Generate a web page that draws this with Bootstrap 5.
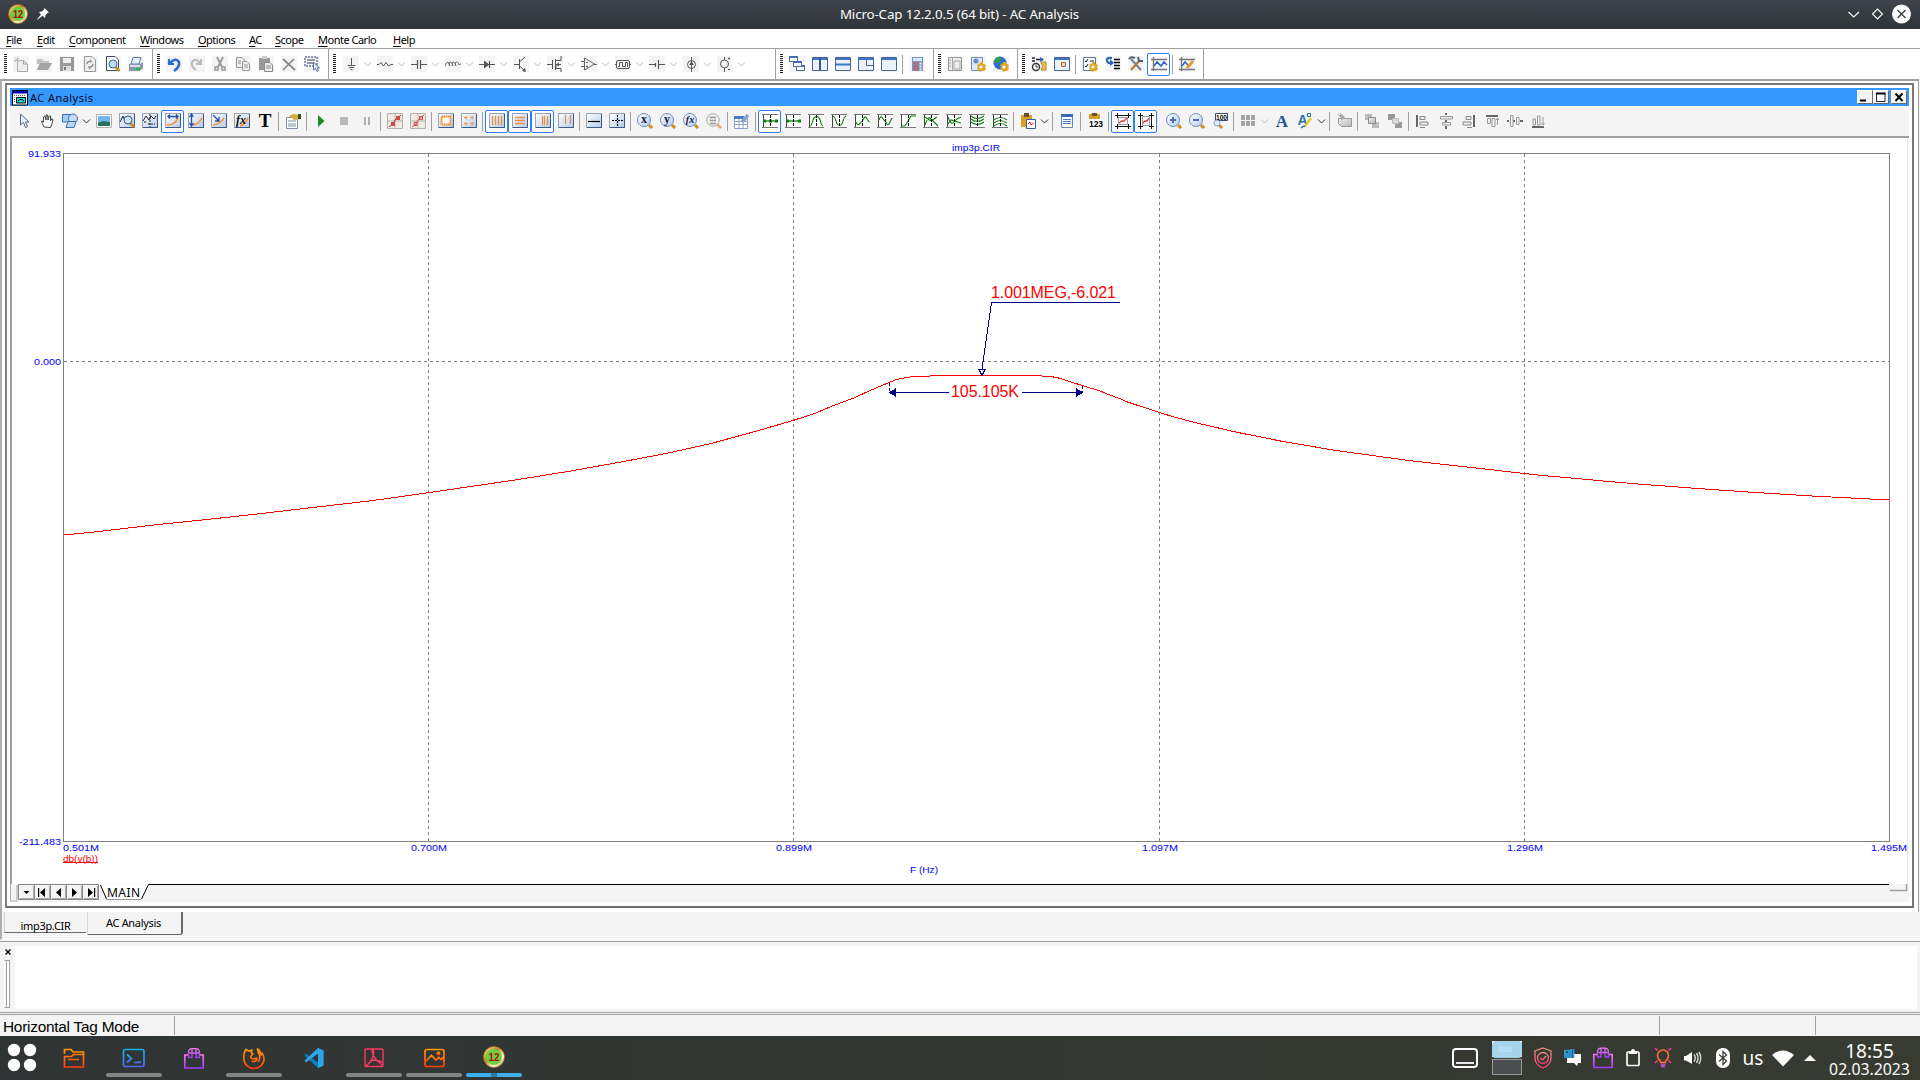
<!DOCTYPE html>
<html lang="en">
<head>
<meta charset="utf-8">
<title>Micro-Cap 12.2.0.5 (64 bit) - AC Analysis</title>
<link href="https://cdn.jsdelivr.net/npm/bootstrap@5.3.0/dist/css/bootstrap.min.css" rel="stylesheet">
<style>
body{width:1920px;height:1080px;overflow:hidden;background:#f4f4f4;color:#000;font:11px/14px "Noto Sans",sans-serif}
svg{display:block;flex:none}
.wm-title{height:29px;background:linear-gradient(#3e434c,#2f3437);color:#fcfcfc;font-size:13.33px;padding:0 9px 1px 8px}
.wm-title>span{letter-spacing:-.13px}
.wm-title>div{flex:1}
.menu-row{height:20px;display:grid;grid-template-columns:31px 32px 71px 58px 51px 26px 43px 75px 60px;padding:4px 0 0 6px;background:#fff;border-bottom:1px solid #a0a0a0;letter-spacing:-.5px}
.menu-row u{text-underline-offset:2px}
.bar-group{height:30px;border-right:1px solid #a0a0a0;padding-right:5px}
.grip-dots{width:9px;height:20px;flex:none;background:repeating-linear-gradient(#222 0 1px,transparent 1px 2px) 4px 0/3px 20px no-repeat}
.g-wide{width:447px}.g-wide .grip-dots{width:10px}
.tool{width:23px;height:23px;flex:none;display:flex;align-items:center;justify-content:center}
.tool svg{overflow:visible}
.bar-group .tool svg{background:#f4f4f4}
.tool-on{border:1px solid #2a7fff;border-radius:2px;background:#fff}
.drop{width:11px;flex:none}
.vsep{width:5px;flex:none;height:19px;border-left:1px solid #a0a0a0;margin-left:2px;margin-right:-2px}
.vgap{width:5px;flex:none}
.mdi{height:835px;width:1919px;background:#fff;border:1px solid #a0a0a0;border-top-width:2px;border-left:2px solid #b0b0b0;padding:2px 0 0 3px}
.child-win{width:1909px;height:825px;border:2px solid #808080;border-top-color:#777;border-bottom-color:#6c6c6c;border-right-color:#787878;padding:3px}
.child-head{height:18px;background:#3399ff;padding-right:2px}
.child-head span{letter-spacing:.45px;color:#0a0a20;padding-top:2px}
.wbtn{width:16px;height:14px;background:#f4f4f4;border:1px solid #fff;border-right:1px solid #696969;border-bottom:1px solid #696969}
.child-tools{height:30px;background:#f4f4f4;padding-left:2px}
.plot-pane{border-top:2px solid #a0a0a0;border-left:2px solid #a0a0a0}
.doc-tabs{height:28px;margin-top:-2px;background:#f4f4f4;border-left:2px solid #b0b0b0;border-bottom:1px solid #fff;padding-left:2px;letter-spacing:-.3px}
.dt{text-align:center;border-bottom:1px solid #696969;border-left:1px solid #d0d0d0}
.dt-a{width:82px;height:21px;padding:7px 0 0;margin-right:1px}
.dt-b{width:96px;height:23px;padding:4px 2px 0 0;border:solid #696969;border-width:0 2px 1px 1px;border-left-color:#d8d8d8;border-radius:0 0 3px 0}
.out-panel{height:72px;border-top:1px solid #a0a0a0;border-bottom:1px solid #a0a0a0;margin-top:1px;padding:4px 3px 3px 0}
.out-left{width:15px}
.out-grip{width:6px;height:48px;margin:2px 0 0 4px;border:1px solid #a0a0a0;border-left-color:#fff;background:linear-gradient(90deg,#f4f4f4 1px,#a0a0a0 1px 2px,#fff 2px)}
.state-row{height:22px;border-top:1px solid #a0a0a0;margin-top:1px;font:15.4px/22px "Liberation Sans",sans-serif;letter-spacing:-.25px;padding-top:1px}
.state-row div{border-right:1px solid #a0a0a0;height:19px}
.panel-bar{height:44px;background:linear-gradient(90deg,#303434,#343832 60%,#383b32);color:#fcfcfc;font-size:19px}
.task{width:60px;height:44px;padding-top:10px;display:flex;flex-direction:column;align-items:center;justify-content:space-between;border-bottom:3px solid transparent}
.task i{width:56px;height:4px;border-radius:2px;background:#858585}
.task i.live{background:linear-gradient(90deg,#3daee9 25px,#2e7ba5 25px 31px,#3daee9 31px)}
.tray{width:30px;height:44px;display:flex;align-items:center;justify-content:center}
.clock-box{width:98px;padding:5px 3px 0 0;text-align:center;line-height:20px}
.clock-box div+div{font-size:15.8px;line-height:16px}
</style>
<script src="https://cdn.jsdelivr.net/npm/bootstrap@5.3.0/dist/js/bootstrap.bundle.min.js"></script>
</head>
<body class="d-flex flex-column">

<svg width="0" height="0" class="position-absolute">
<defs>
<linearGradient id="gOr" x2="0" y2="1"><stop stop-color="#ff9a00"/><stop offset="1" stop-color="#ff3c10"/></linearGradient>
<linearGradient id="gBl" x2="0" y2="1"><stop stop-color="#12b5e8"/><stop offset="1" stop-color="#4d6bff"/></linearGradient>
<linearGradient id="gPu" x2="0" y2="1"><stop stop-color="#f07be8"/><stop offset="1" stop-color="#a03cff"/></linearGradient>
<linearGradient id="gRd" x2="0" y2="1"><stop stop-color="#f0937a"/><stop offset="1" stop-color="#ff3c78"/></linearGradient>
<linearGradient id="gGr" x2="1" y2="1"><stop stop-color="#f4f4f4"/><stop offset="1" stop-color="#b4b4b4"/></linearGradient>
<linearGradient id="gLb" x2="1" y2="1"><stop stop-color="#fff"/><stop offset="1" stop-color="#b4cbea"/></linearGradient>
<linearGradient id="gGold" x2="1" y2="1"><stop stop-color="#fff0a0"/><stop offset=".4" stop-color="#c08a20"/><stop offset=".7" stop-color="#fff6d0"/><stop offset="1" stop-color="#a06a18"/></linearGradient>
<symbol id="logo12" viewBox="0 0 20 20"><circle cx="10" cy="10" r="9.600" fill="url(#gGold)" stroke="#9a7428" stroke-width=".6"/><circle cx="10" cy="10" r="7.200" fill="#6ad040"/><text x="10" y="13.800" text-anchor="middle" font-family="Liberation Sans" font-weight="bold" font-size="10.500" textLength="10" lengthAdjust="spacingAndGlyphs" fill="#b00c0c">12</text></symbol>
<symbol id="bag" viewBox="0 0 22 22"><g fill="none" stroke="url(#gPu)" stroke-width="1.700"><path d="M5.500 7.500H1.800V20.500H20.200V7.500H16.500"/><path d="M5.500 10V4.500Q6 1.200 9 1.200H13Q16 1.200 16.500 4.500V10H13V5.500H9V10ZM9 1.500V5.500M13 1.500V5.500M5.500 5.500H16.500" stroke-width="1.300"/></g></symbol>
</defs></svg>

<header class="wm-title d-flex align-items-center">
 <div class="d-flex align-items-center"><svg width="20" height="20"><use href="#logo12"/></svg>
 <svg class="ms-2" width="14" height="14" viewBox="0 0 14 14"><path d="M8.500 1 13 5.500 11.500 6 9.500 8 9 11 6.500 8.800 1.500 12.800 1 12.500 5 7.500 3 5 6 4.500 8 2.500Z" fill="#fcfcfc"/></svg></div>
 <span>Micro-Cap 12.2.0.5 (64 bit) - AC Analysis</span>
 <div class="d-flex justify-content-end align-items-center"><svg width="64" height="20" viewBox="0 0 64 20" fill="none" stroke="#fcfcfc" stroke-width="1.100"><path d="M1.500 8 6.700 13 12 8M25.500 10 30.500 5 35.500 10 30.500 15Z"/><circle cx="54.500" cy="10" r="8.900" fill="#fcfcfc"/><path d="M50.500 6 58.500 14M58.500 6 50.500 14" stroke="#31363b" stroke-width="1.200"/></svg></div>
</header>

<nav class="menu-row"><span><u>F</u>ile</span><span><u>E</u>dit</span><span><u>C</u>omponent</span><span><u>W</u>indows</span><span><u>O</u>ptions</span><span><u>A</u>C</span><span><u>S</u>cope</span><span><u>M</u>onte Carlo</span><span><u>H</u>elp</span></nav>

<div class="d-flex bg-white">
 <div class="bar-group d-flex align-items-center" data-tools="new open save revert preview print"></div>
 <div class="bar-group d-flex align-items-center" data-tools="undo redo cut copy paste del selbox"></div>
 <div class="bar-group g-wide d-flex align-items-center" data-tools="gnd v res v cap v ind v diode v bjt v mos v opamp v pulse v bat v isrc v vsrc v"></div>
 <div class="bar-group d-flex align-items-center" data-tools="cascade tilev tileh overlap maxi | calc"></div>
 <div class="bar-group d-flex align-items-center" data-tools="panel usercfg globe"></div>
 <div class="bar-group d-flex align-items-center" data-tools="animate winopt | prefs golist tools +scope | scopeedit"></div>
</div>

<main class="mdi">
 <section class="child-win">
  <div class="child-head d-flex align-items-center">
   <svg width="20" height="17" viewBox="0 0 20 17"><path d="M2.500 1.500H17.500V16H2.500Z" fill="#fff" stroke="#000"/><path d="M3 2H17V4.500H3Z" fill="#0000b8"/><path d="M6.500 8.500H15.500V14H6.500Z" fill="#20e0e0" stroke="#000"/><path d="M8 12 10 10.500H12L14 12" stroke="#000" fill="none"/><path d="M4.500 8v6M4 6.500h11" stroke="#555" stroke-dasharray="1 1"/></svg>
   <span>AC Analysis</span>
   <svg class="wbtn ms-auto" viewBox="0 0 14 12"><path d="M2 9.500H8" stroke="#000" stroke-width="2"/></svg>
   <svg class="wbtn" viewBox="0 0 14 12"><path d="M2.500 2.500H11V10.500H2.500Z" fill="#fff" stroke="#223"/><path d="M2 2.500H11.500" stroke="#000" stroke-width="2"/></svg>
   <svg class="wbtn" style="margin-left:2px" viewBox="0 0 14 12"><path d="M3.500 2.500 10.500 10M10.500 2.500 3.500 10" stroke="#000" stroke-width="1.900"/></svg>
  </div>
  <div class="child-tools d-flex align-items-center" data-tools="arrow hand shapes V picture czoom cursor +hscale vscale tag fx bigT | props | play stop pause | redA redB | frame dots | +vlines +hlines +vl2 vl3 | hsplit cross | magX magY magF magE | table | +c0 c1 c2 c3 c4 c5 c6 c7 c8 c9 c10 | clip V | list | num | +boxh +boxv _ zin zout z100 | grid9 v bigA fontAB V | group | front back | al ac ar at am ab"></div>
  <div class="plot-pane">
   <svg width="1897" height="746" viewBox="12 138 1897 746" font-family="Liberation Sans, sans-serif" font-size="9.400" fill="none">
    <rect x="12" y="138" width="1897" height="746" fill="#fff"/>
    <path d="M1907.500 138V884" stroke="#e8e8e8"/>
    <g shape-rendering="crispEdges" stroke="#808080">
     <path d="M63.500 153.500H1889.500V841.500H63.500Z"/>
     <path d="M428.500 154V841M793.500 154V841M1159.500 154V841M1524.500 154V841M64 361.500H1889" stroke-dasharray="3 3"/>
    </g>
    <path shape-rendering="crispEdges" stroke="#f00" d="M64 535 97 531.700 151 525.300 205 519.700 260 513.700 297 509.300 317 507 369 501 389 498.300 428 492.700 464 487.500 515 480 569 471.300 622 461.800 665 453.700 711 443.500 754 431.800 793 420.500 816 413 831 406.500 853 398.300 869 391 889 382.500 897 379.300 907 377.500 913 376.500 930 376 931 375.500 1033 375.500 1051 376.500 1060 378.300 1068 381 1083 385.700 1100 391 1108 394.300 1122 399.500 1128 402.200 1160 412.700 1174 417 1194 422.300 1237 432.300 1250 434.900 1282 441.300 1336 450.500 1403 459.700 1408 460.500 1472 467.500 1524 473.500 1547 475.900 1566 477.500 1601 480.800 1638 484 1695 488.300 1748 492 1812 496 1889 500"/>
    <g shape-rendering="crispEdges" stroke="#000080">
     <path d="M1120 302.500H991.500L982 369M979 369.500H985L982 375.500Z"/><path d="M896 392.500H949M1022 392.500H1076"/>
     <path d="M889.500 383V392M1082.500 386V392" stroke-dasharray="3 2"/>
     <path d="M889.500 392.500 895.500 389V396ZM1082.500 392.500 1076.500 389V396Z" fill="#000080"/>
    </g>
    <g fill="#f00" font-size="16"><text x="991" y="298" textLength="125">1.001MEG,-6.021</text><text x="951" y="397" textLength="68">105.105K</text></g>
    <g fill="#00f" id="axis-labels">
     <text x="28" y="157" textLength="33" lengthAdjust="spacingAndGlyphs">91.933</text><text x="34" y="365" textLength="27" lengthAdjust="spacingAndGlyphs">0.000</text><text x="19" y="845" textLength="42" lengthAdjust="spacingAndGlyphs">-211.483</text>
     <text x="63" y="851" textLength="36" lengthAdjust="spacingAndGlyphs">0.501M</text><text x="411" y="851" textLength="36" lengthAdjust="spacingAndGlyphs">0.700M</text><text x="776" y="851" textLength="36" lengthAdjust="spacingAndGlyphs">0.899M</text><text x="1142" y="851" textLength="36" lengthAdjust="spacingAndGlyphs">1.097M</text><text x="1507" y="851" textLength="36" lengthAdjust="spacingAndGlyphs">1.296M</text><text x="1871" y="851" textLength="36" lengthAdjust="spacingAndGlyphs">1.495M</text>
     <text x="952" y="151" textLength="48" lengthAdjust="spacingAndGlyphs">imp3p.CIR</text><text x="910" y="873" textLength="28" lengthAdjust="spacingAndGlyphs">F (Hz)</text>
    </g>
    <text x="63" y="862" fill="#f00" textLength="35" lengthAdjust="spacingAndGlyphs">db(v(b))</text><path d="M63 862.500H98" stroke="#f00" shape-rendering="crispEdges"/>
   </svg>
  </div>
  <svg width="1899" height="19" viewBox="10 884 1899 19" font-family="Noto Sans, sans-serif">
   <rect x="10" y="884" width="1899" height="19" fill="#f4f4f4"/>
   <path d="M10.500 884V901H18" stroke="#b0b0b0" fill="none"/><path d="M10 902.500H1909" stroke="#fff"/>
   <path d="M17 885V900" stroke="#a0a0a0"/>
   <g fill="#f4f4f4" stroke="#888"><path d="M18.500 884.500h16v15h-16zM34.500 884.500h16v15h-16zM50.500 884.500h16v15h-16zM66.500 884.500h16v15h-16zM82.500 884.500h16v15h-16z"/><path d="M33.500 886v12.500H20M49.500 886v12.500H36M65.500 886v12.500H52M81.500 886v12.500H68M97.500 886v12.500H84" fill="none" stroke="#a8a8a8"/></g>
   <path d="M23.500 891h6l-3 3zM45 888v9l-5-4.500zM61 888v9l-5-4.500zM72 888v9l5-4.500zM88 888v9l5-4.500zM38 888h1.200v9H38zM94 888h1.200v9H94z"/>
   <path d="M100.500 884.500 106.500 899H141.500L148.500 884.500Z" fill="#fff"/>
   <path d="M100.500 885 106.500 899M141.500 899 148.500 884.500H1889" stroke="#000" fill="none"/><path d="M106.500 899.500H141" stroke="#999"/>
   <text x="107" y="897" font-size="12" textLength="33">MAIN</text>
   <path d="M1890 884H1907V891H1890Z" fill="#f4f4f4"/><path d="M1890 890.500H1906.500V884" stroke="#a0a0a0" stroke-width="1.500" fill="none"/>
  </svg>
 </section>
</main>

<div class="doc-tabs d-flex align-items-start"><div class="dt dt-a">imp3p.CIR</div><div class="dt dt-b">AC Analysis</div></div>

<div class="out-panel d-flex"><div class="out-left"><svg width="15" height="12" viewBox="0 0 15 12"><path d="M5.500 3.500 10.500 8.500M10.500 3.500 5.500 8.500" stroke="#111" stroke-width="1.500"/></svg><div class="out-grip"></div></div><div class="flex-fill bg-white"></div></div>

<footer class="state-row d-flex"><div style="width:175px;padding-left:3px">Horizontal Tag Mode</div><div style="width:1485px"></div><div style="width:156px"></div></footer>

<div class="panel-bar d-flex">
 <svg width="44" height="44" viewBox="0 0 44 44" fill="#fff"><circle cx="14" cy="14" r="6.200"/><circle cx="30" cy="14" r="6.200"/><circle cx="14" cy="29" r="6.200"/><circle cx="30" cy="29" r="6.200"/></svg>
 <div class="task"><svg width="24" height="24" viewBox="0 0 24 24" fill="none" stroke="url(#gOr)" stroke-width="1.700"><path d="M2.500 8V3.500H9L11 6H21.500V21H2.500V10.500H9.500L11.500 8.500H21M6 13.500H17"/></svg></div>
 <div class="task"><svg width="24" height="24" viewBox="0 0 24 24" fill="none" stroke="url(#gBl)" stroke-width="1.700"><rect x="1.500" y="3.500" width="20.500" height="17" rx="2"/><path d="M5 8.500 9.500 12.500 5 16.500"/><path d="M12 16.500 19 16.400"/></svg><i></i></div>
 <div class="task"><svg width="22" height="24" viewBox="0 0 22 24"><use href="#bag" y="1.500" width="22" height="22"/></svg></div>
 <div class="task"><svg width="24" height="24" viewBox="0 0 24 24" fill="none" stroke="url(#gOr)" stroke-width="1.700" stroke-linejoin="round"><path d="M4 3Q5 5 7 5L10 4Q8.500 7 11 8L9 10Q8 13 12 13Q15 11 15 13Q13 17 9.500 15M4 3Q1 8 2 13A10 9.500 0 0 0 22 13Q22 9 20 7L19 9Q18 4 15.500 3Q16 6 17.500 9Q18.500 13 16 16"/></svg><i></i></div>
 <div class="task"><svg width="22" height="24" viewBox="0 0 22 24"><path d="M15 2 20.500 4.500V19.500L15 22 1.500 9.500 3 7.500 15 16.500Z" fill="#0b7fc4"/><path d="M15 2 20.500 4.500V19.500L15 22V7.500L3 16.500 1.500 14.500Z" fill="#2da5ea"/></svg></div>
 <div class="task"><svg width="22" height="24" viewBox="0 0 22 24" fill="none" stroke="#ff3864" stroke-width="1.400"><rect x="2" y="3" width="18" height="17.500" rx="1"/><path d="M3 20Q12 13 10.500 4Q9.500 2 9 5Q10 13 20 19.500M7 15Q13 13 19 16"/></svg><i></i></div>
 <div class="task"><svg width="24" height="24" viewBox="0 0 24 24" fill="none" stroke="url(#gOr)" stroke-width="1.700"><rect x="3" y="3.500" width="19" height="17" rx="2"/><path d="M3 16 9.500 9.500 14 14 17 11.500 19 13.500 22 11"/><circle cx="16.500" cy="7.500" r="1.200"/></svg><i></i></div>
 <div class="task"><svg width="22" height="22"><use href="#logo12" width="22" height="22"/></svg><i class="live"></i></div>
 <div class="ms-auto tray" style="width:42px"><svg width="26" height="20" viewBox="0 0 26 20" fill="none" stroke="#fcfcfc"><rect x="1" y="1" width="24" height="18" rx="3" stroke-width="2"/><path d="M4 15H22" stroke-width="1.800"/></svg></div>
 <div class="tray" style="width:42px"><svg width="30" height="34" viewBox="0 0 30 34"><rect width="30" height="16" fill="#fff"/><rect width="30" height="17" rx="4" fill="#a5d3ec"/><rect x="6" y="5" width="14" height="6" fill="#b2ddf4"/><rect x=".5" y="18.500" width="29" height="15" fill="#4a4e50" stroke="#999"/></svg></div>
 <div class="tray"><svg width="20" height="22" viewBox="0 0 20 22" fill="none" stroke="url(#gRd)" stroke-width="1.300"><path d="M10 1 18 4V11Q18 18 10 21Q2 18 2 11V4Z"/><circle cx="10" cy="11" r="5.500"/><path d="M7.500 11 9.500 13 13 9"/></svg></div>
 <div class="tray"><svg width="18" height="18" viewBox="0 0 18 18"><path d="M3 5H17V14H14L13 17 10 14H3Z" fill="#fcfcfc"/><path d="M0 0H10V9H0Z" fill="#343832"/><path d="M1 9V1.500H5V9M7 0V9M3 4V9M9.500 0V9" stroke="#2ea0ea" stroke-width="1.700" fill="none"/></svg></div>
 <div class="tray"><svg width="22" height="22"><use href="#bag" width="22" height="22"/></svg></div>
 <div class="tray"><svg width="16" height="18" viewBox="0 0 16 18"><rect x="2" y="3" width="12" height="13.500" rx="1" fill="none" stroke="#fcfcfc" stroke-width="1.700"/><path d="M4 2H6A2 2 0 0 1 10 2H12V5H4Z" fill="#fcfcfc"/></svg></div>
 <div class="tray"><svg width="20" height="22" viewBox="0 0 20 22" fill="none" stroke="#ff7038" stroke-width="1.500"><path d="M7.500 14Q4.500 12 4.500 8.500A5.500 5.500 0 0 1 15.500 8.500Q15.500 12 12.500 14V15.500H7.500Z"/><path d="M2 1 4.500 3.500M18 1 15.500 3.500M2 16 4.500 13.500M18 16 15.500 13.500" stroke="#ff3c78"/><path d="M7.500 17.500h5M8 19.500h4" stroke="#a050c8" stroke-width="1.800"/></svg></div>
 <div class="tray"><svg width="18" height="16" viewBox="0 0 18 16"><path d="M0 6H2L8 2V14L2 10.500H0Z" fill="#fcfcfc"/><path d="M10 4.500Q12.500 8 10 11.500M12.500 3Q15.500 8 12.500 13M15 2Q18.500 8 15 14" stroke="#ccc" fill="none" stroke-width="1.500"/></svg></div>
 <div class="tray"><svg width="14" height="20" viewBox="0 0 14 20"><rect width="14" height="20" rx="6.500" fill="#fcfcfc"/><path d="M3 6.500 10.500 13 7 16.500V3.500L10.500 7 3 13.500" fill="none" stroke="#343832" stroke-width="1.200"/></svg></div>
 <div class="tray">us</div>
 <div class="tray"><svg width="22" height="17" viewBox="0 0 22 17"><path d="M0 5Q11-4 22 5L11 16.500Z" fill="#fcfcfc"/></svg></div>
 <div class="tray" style="width:24px"><svg width="12" height="6" viewBox="0 0 12 6"><path d="M0 6 6 0 12 6Z" fill="#fcfcfc"/></svg></div>
 <div class="clock-box"><div>18:55</div><div>02.03.2023</div></div>
</div>

<script>
// Shared pieces of the toolbar glyphs
const p=(d,c='#555',w=1,f='none')=>`<path d="${d}" stroke="${c}" stroke-width="${w}" fill="${f}"/>`;
const f=(d,c)=>`<path d="${d}" fill="${c}"/>`;
const sheet=(s='')=>`<rect x=".5" y=".5" width="15" height="14" fill="url(#gLb)" stroke="#9aa6b8"/>`+p('M15.500 1V14.500H1','#3c5a88')+`<g transform="translate(0 -1)">${s}</g>`;
const axes=s=>f('M0 1H16V15H0Z','#fff')+p('M1.500 1V15','#444')+p('M0 1.500H16M0 14.500H16','#777')+s+p('M8.500 2V14','#000').replace('/>',' stroke-dasharray="3 1"/>');
const green=d=>axes(p(d,'#0a800a',1.100));
const win=s=>f('M.5 1.500H15.500V14.500H.5Z','#eaf2fc')+p('M.5 1.500H15.500V14.500H.5Z','#4a6496')+f('M1 2H15V4H1Z','#3f74c8')+s;
const lens=(s,c='#6c8cc0')=>p('M12 12 15 15','#d08a20',3)+`<circle cx="7" cy="7" r="6.500" fill="url(#gLb)" stroke="${c}"/>`+s;
const letter=(t,x,y,z,c,k='')=>`<text x="${x}" y="${y}" font-size="${z}" fill="${c}" font-family="Liberation Serif" font-weight="bold" text-anchor="middle" ${k}>${t}</text>`;
const gear=f('M11 6h2v2l2 0 1 2-1 1 1 2-2 2h-2l-2 1-1-2-2-1 1-2-1-2 2-1z','#e0a820')+`<circle cx="11" cy="11" r="1.600" fill="#fff"/>`;
const G='#999',D='#555';
const icons={
new:p('M4.500 4.500H10.500L14.500 8V15.500H4.500Z','#aaa',1,'#eee')+p('M10.500 4.500V8H14','#999')+p('M1 4.500H7M4.500 1V7M2 2l4 4M6 2 2 6','#bbb'),
open:f('M1 3H6L8 5H13V8H1Z','#c4c4c4')+f('M4 7H16L12 14H1Z','#a4a4a4'),
save:f('M1 1H15V15H1Z',G)+f('M4 2H12V7H4Z','#eee')+f('M4 10H12V15H4Z','#ddd')+f('M5 11h2v3H5z','#777'),
revert:p('M2.500 .5H10L13.500 4V15.500H2.500Z',G,1,'#eee')+p('M5 8Q5 5 9 5.500L8 4M11 8Q11 11 7 11L8 13','#888',1.300),
preview:p('M1.500 .5H10L13.500 4V14.500H1.500Z','#3c4c70',1,'#fff')+p('M10.500 11 14.500 15','#d08a20',2.500)+`<circle cx="8" cy="8" r="4" fill="#b8dcf5" stroke="#49688c"/>`,
print:f('M5 1H13L11 8H3Z','#e8f2ff')+p('M5 1.500H13L11 8H3Z','#5577a8')+f('M1 8H12L15 6V12L12 15H1Z','#8897ac')+f('M2 9H12V11H2Z','#dde')+f('M8 12h4v2H8z','#20c030'),
undo:p('M3 3V8H8','#2c6cd8',2.200)+p('M4 7Q10 1 13 6Q14 11 8 15','#2c6cd8',2.600),
redo:p('M12 3V8H7','#bbb',2)+p('M11 7Q6 1 3 6Q2 11 7 14','#bbb',2.200),
cut:p('M5 1 10 11M11 1 6 11',G,1.800)+p('M3 11h3v3H3zM10 11h3v3h-3z',G,1.500),
copy:p('M1.500 1.500H7L9.500 4V11.500H1.500Z',G,1,'#eee')+p('M7.500 5.500H12L14.500 8V14.500H7.500ZM9 9h4M9 11h4M3 5h3M3 7h3',G,1,'#eee'),
paste:f('M1 2H12V14H1Z',G)+f('M4 0H9V3H4Z','#ccc')+p('M6.500 6.500H12L14.500 9V15.500H6.500ZM8 10h5M8 12h5','#888',1,'#eee'),
del:p('M2 3 14 14M13 3 2 14','#888',1.700),
selbox:`<rect x="1" y="1" width="12" height="9" fill="none" stroke="#223a70" stroke-dasharray="2 1"/>`+p('M3 4h8M3 7h6','#334')+p('M9.500 6V14L11.500 12.500 13 15.500 14.500 14.500 13 12H15.500Z','#3c5a88',.8,'#dbe8fa'),
gnd:p('M8.500 2V9M4.500 9.500H12.500M6 11.500H11M7.500 13.500H9.500',D,1),
res:p('M0 8.500H2L4 6.500 6.500 10 9 6.500 11.500 10 14 8.500H16',D,1),cap:p('M0 8.500H6M10 8.500H16M6.500 4V13M9.500 4V13',D,1.200),
ind:p('M0 10.500Q1 6 3 6L5 10 4 7Q6 4 8 10L7 7Q9 4 11 10L10 7Q13 4 14 9L16 8',D,.8),
diode:p('M0 8.500H16M10.500 5V12',D,1.200)+f('M5 4.500 10.500 8.500 5 12.500Z',D),bjt:p('M1 8.500H6M6.500 3V13M12 1 6.500 6M6.500 10 12 15',D,1)+f('M13 16 9 15 12 12Z',D),
mos:p('M0 8.500H5M5.500 4V13M8.500 3V14M8 4.500H14V0M8 12.500H14V16M14 8.500H9V12',D,1)+f('M9 8.500 12 6.500V10.500Z',D),
opamp:p('M3.500 2V14L13.500 8ZM0 5.500H3M0 10.500H3M13 8.500H16M5 6.500H7M5 10.500H7M6 9.500V11.500',D,.9),
pulse:`<rect x="1.500" y="4.500" width="13" height="8" rx="1.500" fill="none" stroke="#555"/>`+p('M3 10.500H4.500V6.500H7.500V10.500H10.500V6.500H12.500V11M0 8.500h1M15 8.500h1',D),
bat:p('M0 8.500H6M10 8.500H16M6.500 7V11M9.500 4V13',D,1.200),isrc:`<circle cx="8.500" cy="8.500" r="4" fill="none" stroke="#555"/>`+p('M8.500 1V16',D)+f('M6 9 8.500 5 11 9Z',D),
vsrc:`<circle cx="7.500" cy="8" r="4" fill="none" stroke="#555"/>`+p('M7.500 1V4M7.500 12V16M11 2.500H13M12 1.500V3.500M11 13.500H13',D),
cascade:f('M0 0H9V6H0ZM4 5H13V11H4ZM7 9H16V15H7Z','#4a6ab0')+f('M1 2H8V5H1ZM5 7H12V10H5ZM8 11H15V14H8Z','#fff'),
tilev:win(p('M8 2V14','#38568c',2)),tileh:win(p('M1 8.500H15','#3f74c8',2)),overlap:win(p('M8.500 4V9.500H15','#4a6496')),maxi:win(''),
calc:f('M3 1H14V15H3Z','#8194bc')+f('M4 2H13V5H4Z','#d8e8f8')+p('M5.500 6.500V15M8.500 6.500V15','#d84848',1.800).replace('/>',' stroke-dasharray="2 1"/>')+p('M11.500 6.500V15','#dfe8f8',2).replace('/>',' stroke-dasharray="2 1"/>'),
panel:p('M1.500 1.500H14.500V14.500H1.500Z',G,1,'#eee')+p('M5.500 2V14M7 5h6V13H7ZM2 4h2M2 7h2M2 10h2','#aaa'),
usercfg:p('M1.500 1.500H12.500V14.500H1.500Z','#7c8eb0',1,'#dce8f8')+`<circle cx="6" cy="5" r="2.500" fill="#6c88c0"/>`+gear,
globe:`<circle cx="7" cy="7" r="6.500" fill="#2f6fd0"/>`+f('M3 2Q6 0 8 2L7 6 3 7 1 5ZM8 7 12 6 12 9 8 12Z','#32a042')+gear,
animate:p('M1 2h3M1 5h3M5 3.500h7','#223',1.300)+f('M9 1 13 3.500 9 6Z','#2c66c0')+`<circle cx="5" cy="11" r="3.500" fill="#fff" stroke="#333" stroke-width="1.400"/>`+p('M5 9V11H7','#333')+p('M10 6Q13 10 10 14H15V6Z','#b88820',1,'#e6c050'),
winopt:win(f('M7 6H12V11H7Z','#f4d8c0')+p('M7.500 6.500H11.500V10.500H7.500Z','#b86038')),
prefs:p('M1.500 1.500H13.500V14.500H1.500Z','#6079a8',1,'#f6f9ff')+p('M3 5l1 1 2-3M3 10l1 1 2-3M8 5h4','#223')+gear,
golist:p('M7 2Q1 1 2 5Q3 8 7 7','#2c66c0',2.200)+f('M5 3 9 7 5 10Z','#2c66c0')+p('M9 3.500h6M9 6.500h6M9 9.500h6M9 12.500h6','#000',1.300),
tools:p('M3 3 13 14','#7b8494',2.200)+p('M12 4 3 14','#b87838',2.200)+p('M1 3Q3 0 7 2M10 1 11 5 15 5','#566070',2),
scope:p('M2.500 1V15M0 3.500H16M0 13.500H16','#777',1.300)+p('M3 10 6 6 10 10 13 6 16 9','#2c66c0',1.500),
scopeedit:p('M2.500 1V15M0 3.500H16M0 13.500H16','#777',1.300)+p('M3 10 6 6 9 9','#2c66c0',1.500)+p('M8 12 14 5','#d8a038',3),
arrow:p('M4.500 1V12L7.500 9.500 9.500 14.500 11.500 13.500 9.500 9H13Z','#51688c',1,'#e8f0fb'),
hand:p('M5 14Q3 10 2.500 8L4.500 9V4L6 3 7 7V2L8.500 2 9 7 10 3 11.500 3V8L13 5.500 14 7Q13 11 11.500 14.500Z','#444',1,'#fff'),
shapes:p('M.5 1.500H9V9H.5Z','#3c6cb0',1,'#a8cdf2')+`<circle cx="11" cy="5.500" r="4.500" fill="#c5ddf5" stroke="#3c6cb0"/>`+p('M6 8.500H14L12 14.500H4Z','#3c6cb0',1,'#b8d6f5'),
picture:p('M.5 1.500H15.500V14.500H.5Z','#b0b0b0',1,'#fff')+f('M2 3H14V13H2Z','#72b4ec')+f('M2 10 7 8 14 9V13H2Z','#287058'),
czoom:sheet(p('M1 10 4 4 6 9','#223')+p('M11 11 15 15','#d08a20',2.500)+`<circle cx="9" cy="8" r="4" fill="#cfe5fb" stroke="#3c5a88"/>`),
cursor:sheet(p('M1 9 4 4 7 8 9 4 12 7 14 4','#223')+p('M8 2V15M2 10h3M6 12h7','#222').replace('/>',' stroke-dasharray="2 1"/>')),
hscale:sheet(p('M2 13Q10 13 13 6','#ff8a20',1.500)+p('M3 4.500H13M5 2.500 3 4.500 5 6.500M11 2.500 13 4.500 11 6.500','#2050b0',1.300)),
vscale:sheet(p('M5 13Q11 12 14 6','#ff8a20',1.500)+p('M3.500 2V14M1.500 5 3.500 2 5.500 5M1.500 11 3.500 14 5.500 11','#2050b0',1.300)),
tag:sheet(p('M2 13Q10 12 13 6','#ff8a20',1.500)+p('M2 3 8 9M8 5V9H4','#2050b0',1.300)),
fx:sheet(p('M6 14Q12 12 14 6','#ff8a20',1.500)+letter('fx',7,11.500,12,'#111','font-style="italic"')),
bigT:letter('T',8,14,19,'#000'),
props:p('M1.500 4.500H12.500V15.500H1.500ZM3 8h8M3 11h8M3 13h8','#8090a8',1,'#fff')+f('M4 3 8 1 15 2V6L9 7 7 5Z','#d8b038')+f('M13 1h3v5h-3z','#3c5030'),
play:f('M5 2 11.500 8 5 14Z','#1c8a28'),stop:f('M4 4H12V12H4Z','#b8b8b8'),pause:f('M5 4H7V12H5ZM9 4H11V12H9Z','#b0b0b0'),
redA:p('M.5 .5H15.500V15.500H.5ZM8 0V16M0 8H16','#b8b0a8',1,'#f0ece4')+p('M2 14 6 11 8 7 14 2','#b03030')+f('M4 9h4v4H4zM9 3h4v4H9z','#d04848'),
redB:p('M.5 .5H15.500V15.500H.5ZM8 0V16M0 8H16','#b8b0a8',1,'#f0ece4')+p('M2 14 6 11 8 7 14 2M4 9.500h3v3H4zM9.500 3.500h3v3h-3z','#d04848'),
frame:sheet(`<rect x="3.500" y="4.500" width="9" height="8" fill="#fff" stroke="#ff8a20" stroke-width="2" stroke-dasharray="1.500 .5"/>`),
dots:sheet(p('M3 5.500h4M9 5.500h4M3 11.500h4M9 11.500h4M5 4v4M11 4v4M5 10v4M11 10v4','#ff8a20').replace('/>',' stroke-dasharray="1.500 .5"/>')),
vlines:sheet(p('M3.500 4V13M6.500 4V13M9.500 4V13M12.500 4V13','#e89040',1.300)),hlines:sheet(p('M3 5.500H13M3 8.500H13M3 11.500H13','#e89040',1.300)),
vl2:sheet(p('M7.500 4V13M9.500 4V13M12.500 4V13','#e89040',1.200)),vl3:sheet(p('M7.500 3V12M12.500 3V12','#e89040',1.200)),
hsplit:sheet(p('M2 9.500H14','#000',1.200)),cross:sheet(p('M3 8.500H14M8.500 3V14','#000',1.200).replace('/>',' stroke-dasharray="2 1"/>')),
magX:lens(letter('x',7,10,12,'#102040')),magY:lens(letter('y',7,9.500,12,'#102040')),magF:lens(letter('fx',7,10,10,'#102040','font-style="italic"')),
magE:p('M11 11 15 15','#e0a868',2.500)+`<circle cx="7" cy="7" r="6.300" fill="#eee" stroke="#aaa"/>`+p('M4 4.500H10M4 7.500H10M4 10.500H10','#999',1.300),
table:p('M.5 4.500H13.500V15.500H.5ZM.5 8.500H13M.5 11.500H13M5 5V15M9 5V15','#8ca4cc',1,'#fff')+f('M0 3H10V6H0Z','#4a78c8')+p('M8 9 14 2','#8ca4c8',3.500),
c0:axes(p('M1 8H16','#0a800a',1.300)+f('M1 6.500h3v3H1zM13 6.500h3v3h-3zM7 6.500h3v3H7z','#0a800a')),c1:axes(p('M1 8H16','#0a800a',1.300)+f('M1 6.500h3v3H1zM13 6.500h3v3h-3z','#0a800a')),
c2:green('M2 13Q4 12 5 7Q6 3.500 8.500 3.500Q11 3.500 12 7Q13 12 15 13'),c3:green('M2 3Q4 4 5 8Q6 12.500 8.500 12.500Q11 12.500 12 8Q13 4 15 3'),c4:green('M2 9Q3.500 13 5.500 11T9 7Q11 2 12.500 5T15.500 9'),c5:green('M2 7Q3.500 2 5.500 5T9 9Q11 14 12.500 10T15.500 5'),
c6:green('M1 13H5L11 3H16'),c7:green('M2 12Q5 3 7 5T15 13M2 4 8 8 14 4'),c8:green('M2 4Q5 13 8 9T15 4M2 11 5 7 15 10'),
c9:green('M2 3Q8 8 15 3M2 6Q8 11 15 6M2 9Q8 14 15 9'),c10:green('M2 7Q8 2 15 7M2 10Q8 5 15 10M2 13Q8 8 15 13'),
clip:f('M1 2H12V14H1Z','#d8a028')+f('M4 0H9V4H4Z','#665030')+p('M6.500 6.500H15.500V15.500H6.500Z','#3c5a98',1,'#fff')+p('M8 11 10 9 11 12 14 10','#d03030'),
list:p('M2.500 1.500H13.500V14.500H2.500Z','#6c84b0',1,'#fff')+f('M2 1H14V4H2Z','#3f68b8')+p('M4 6.500h8M4 8.500h8M4 10.500h8','#4a78c8'),
num:f('M2 1H13V14H2Z','#d8a028')+f('M5 0H10V3H5Z','#665030')+f('M2 6H16V15H2Z','#fff')+`<text x="9" y="14" text-anchor="middle" font-size="8.500" font-family="Liberation Sans" font-weight="bold">123</text>`,
boxh:p('M0 2.500H16M0 13.500H16M2.500 0V5M13.500 0V5M2.500 11V16M13.500 11V16','#111')+p('M3.500 4.500H12.500V11.500H3.500Z','#99a')+p('M4 10 7 8H9L12 5','#e03030',1.300),
boxv:p('M2.500 0V16M13.500 0V16M0 2.500H5M11 2.500H16M0 13.500H5M11 13.500H16','#111')+p('M4.500 3.500H11.500V12.500H4.500Z','#99a')+p('M5 10 7 8H9L11 5','#e03030',1.300),
zin:lens(p('M4 7H10M7 4V10','#4a6cb0',2)),zout:lens(p('M4 7H10','#4a6cb0',2)),
z100:p('M3.500 .5H15.500V7.500H3.500Z','#334a78',1,'#fff')+`<text x="9.500" y="7" text-anchor="middle" font-size="6.500" font-family="Liberation Sans" font-weight="bold">100</text>`+p('M7 12 10 15','#d08a20',2.500)+`<circle cx="5" cy="10" r="3" fill="#e0eefc" stroke="#8aa0c0"/>`,
grid9:f('M1 2h4v5H1zM6 2h4v5H6zM11 2h4v5h-4zM1 8h4v5H1zM6 8h4v5H6zM11 8h4v5h-4z','#a4a4a4'),bigA:letter('A',8,13.500,17,'#23509c'),
fontAB:`<text x="5.500" y="12" text-anchor="middle" font-size="14" font-family="Liberation Sans" font-weight="bold" fill="#2c70b8">A</text>`+p('M10.500 .5h3v3h-3z','#2c70b8')+p('M8 13 14 5','#e8c820',2.500)+p('M4 15Q7 12 8 14','#2c70b8',1.500),
group:p('M2.500 5.500H15.500V13.500H5.500L2.500 10.500Z','#999',1,'url(#gGr)')+f('M1 1 4 2 4 0 9 4 5 8 5 5Z','#aaa'),front:f('M1 1h7v6H1zM8 9h7v6H8z','#bbb')+p('M4.500 4.500h7v6h-7z','#888',1,'url(#gGr)'),back:f('M1 1h7v6H1zM8 9h7v6H8z',G)+p('M5.500 5.500h6v5h-6z','#bbb',1,'#ddd'),
al:p('M2 2V14','#666',2)+p('M5 3.500h5v3H5zM5 9h8v3H5zM5 14.500h5','#888',1,'#eee'),ac:p('M8 0V2M8 7V9M8 13V16','#666',2)+p('M2.500 3.500h12v2.500h-12zM4.500 9.500h8v2.500h-8z','#999',1,'#eee'),
ar:p('M13 2V14','#666',2)+p('M5 3.500h5v3H5zM2 9h8v3H2zM6 14.500h5','#888',1,'#eee'),at:p('M2 3H14','#666',2)+p('M3.500 5.500h3v5h-3zM8 5.500h3v8H8zM13.500 5V12M12 7 13.500 5 15 7','#999'),
am:p('M0 8H2M6 8H8M13 8H16','#666',2)+p('M3.500 2.500h2.500v11H3.500zM9.500 4.500H12v7H9.500z','#999'),ab:p('M2 14H14','#666',2)+p('M3 6h2.500v6H3zM7.500 3H10v9H7.500zM13 4V12M11.500 10 13 12 14.500 10','#999')
};
const chevron=c=>`<svg class="drop" height="16" viewBox="0 0 11 16"><path d="M2 6.500 5.500 10 9 6.500" fill="none" stroke="${c}"/></svg>`;
document.querySelectorAll('[data-tools]').forEach(bar=>{
  const cells=bar.dataset.tools.split(' ').map(t=>{
    if(t==='|')return '<span class="vsep"></span>';
    if(t==='_')return '<span class="vgap"></span>';
    if(t==='v')return chevron('#b8b8b8');
    if(t==='V')return chevron('#333');
    const on=t[0]==='+';
    return `<span class="tool${on?' tool-on':''}"><svg width="16" height="16" viewBox="0 0 16 16">${icons[on?t.slice(1):t]}</svg></span>`;
  }).join('');
  bar.innerHTML=(bar.classList.contains('bar-group')?'<span class="grip-dots"></span>':'')+cells;
});
</script>
</body>
</html>
